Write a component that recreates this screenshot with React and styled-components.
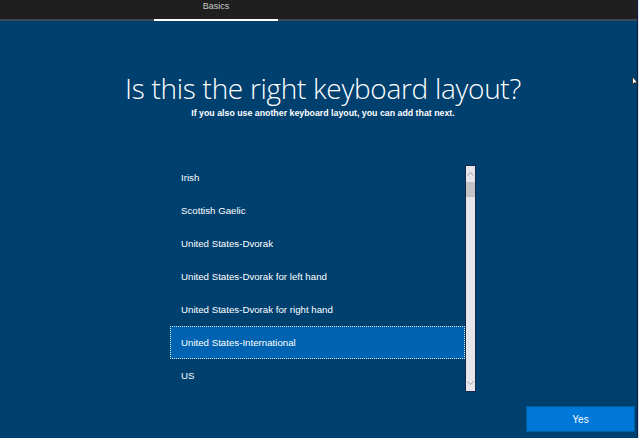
import React from 'react';
import styled, { createGlobalStyle } from 'styled-components';

const GlobalStyle = createGlobalStyle`
  html, body {
    margin: 0;
    padding: 0;
    background: #00406f;
  }
  body {
    font-family: "Open Sans", "Liberation Sans", sans-serif;
  }
`;

const layouts = [
  'Irish',
  'Scottish Gaelic',
  'United States-Dvorak',
  'United States-Dvorak for left hand',
  'United States-Dvorak for right hand',
  'United States-International',
  'US',
];

const App = () => {
  return (
    <Page>
      <GlobalStyle />
      <Screen>
        <TopBar>
          <Tab>Basics</Tab>
        </TopBar>
        <Main>
          <Title>Is this the right keyboard layout?</Title>
          <Subtitle>If you also use another keyboard layout, you can add that next.</Subtitle>
          <ListBox>
            <Rows>
              {layouts.map((name) => (
                <Row key={name} selected={name === 'United States-International'}>
                  {name}
                </Row>
              ))}
            </Rows>
            <Scrollbar>
              <ScrollArrow>
                <svg width="7" height="4" viewBox="0 0 7 4">
                  <path d="M0.5 3.5 L3.5 0.5 L6.5 3.5" fill="none" stroke="#a0a0a0" strokeWidth="1" />
                </svg>
              </ScrollArrow>
              <Thumb />
              <Track />
              <ScrollArrow>
                <svg width="7" height="4" viewBox="0 0 7 4">
                  <path d="M0.5 0.5 L3.5 3.5 L6.5 0.5" fill="none" stroke="#a0a0a0" strokeWidth="1" />
                </svg>
              </ScrollArrow>
            </Scrollbar>
          </ListBox>
        </Main>
        <Footer>
          <YesButton>Yes</YesButton>
        </Footer>
        <Cursor>
          <svg width="6" height="10" viewBox="0 0 6 10">
            <path d="M0.5 0.5 L0.5 8.5 L2.5 6.8 L5.5 6.8 Z" fill="#fff" stroke="#222" strokeWidth="0.8" />
          </svg>
        </Cursor>
      </Screen>
      <Edge />
    </Page>
  );
};

export default App;

/**
 * Styled Components
 */

const Page = styled.div`
  display: flex;
  width: 639px;
  height: 438px;
  overflow: hidden;
  background: #00406f;
`;

const Screen = styled.div`
  position: relative;
  flex: 1;
  display: flex;
  flex-direction: column;
  min-width: 0;
`;

const Edge = styled.div`
  width: 1px;
  border-left: 1px solid #0d1f45;
  background: #e4e4ee;
`;

const TopBar = styled.div`
  display: flex;
  height: 19px;
  padding-left: 154px;
  background: #1f1f1f;
  border-bottom: 2px solid #3a4856;
`;

const Tab = styled.div`
  width: 124px;
  margin-bottom: -2px;
  border-bottom: 2px solid #ffffff;
  color: #c9c9c9;
  font-family: "Liberation Sans", sans-serif;
  font-size: 9px;
  text-align: center;
  line-height: 12px;
`;

const Main = styled.div`
  display: flex;
  flex-direction: column;
  align-items: center;
  padding-left: 9px;
`;

const Title = styled.h1`
  margin: 50px 0 0;
  color: #ffffff;
  font-family: "Open Sans", sans-serif;
  font-weight: 300;
  font-size: 28px;
  line-height: 34px;
  letter-spacing: -0.3px;
`;

const Subtitle = styled.p`
  margin: 2px 0 0;
  color: #ffffff;
  font-family: "Liberation Sans", sans-serif;
  font-weight: 700;
  font-size: 8.8px;
  line-height: 12px;
`;

const ListBox = styled.div`
  display: flex;
  margin-top: 42px;
  height: 231px;
`;

const Rows = styled.div`
  display: flex;
  flex-direction: column;
  width: 295px;
`;

const Row = styled.div`
  box-sizing: border-box;
  height: 33px;
  display: flex;
  align-items: center;
  padding-left: 10px;
  color: #ffffff;
  font-family: "Liberation Sans", sans-serif;
  font-size: 9.7px;
  background: ${(p) => (p.selected ? '#0063b1' : 'transparent')};
  border: 1px dotted ${(p) => (p.selected ? '#d6e4f0' : 'transparent')};
`;

const Scrollbar = styled.div`
  box-sizing: border-box;
  display: flex;
  flex-direction: column;
  width: 11px;
  height: 227px;
  margin-top: 4px;
  background: #e6e6ea;
  border: 1px solid #14284f;
`;

const ScrollArrow = styled.div`
  height: 16px;
  display: flex;
  align-items: center;
  justify-content: center;
`;

const Thumb = styled.div`
  height: 15px;
  background: #c3c3c6;
`;

const Track = styled.div`
  flex: 1;
`;

const Footer = styled.div`
  display: flex;
  justify-content: flex-end;
  padding: 14px 2px 0 0;
`;

const YesButton = styled.button`
  width: 109px;
  height: 26px;
  background: #0078d7;
  border: 1px solid #005c9f;
  color: #ffffff;
  font-family: "Liberation Sans", sans-serif;
  font-size: 10px;
  padding: 0;
`;

const Cursor = styled.div`
  position: absolute;
  right: -1px;
  top: 76px;
  line-height: 0;
`;
